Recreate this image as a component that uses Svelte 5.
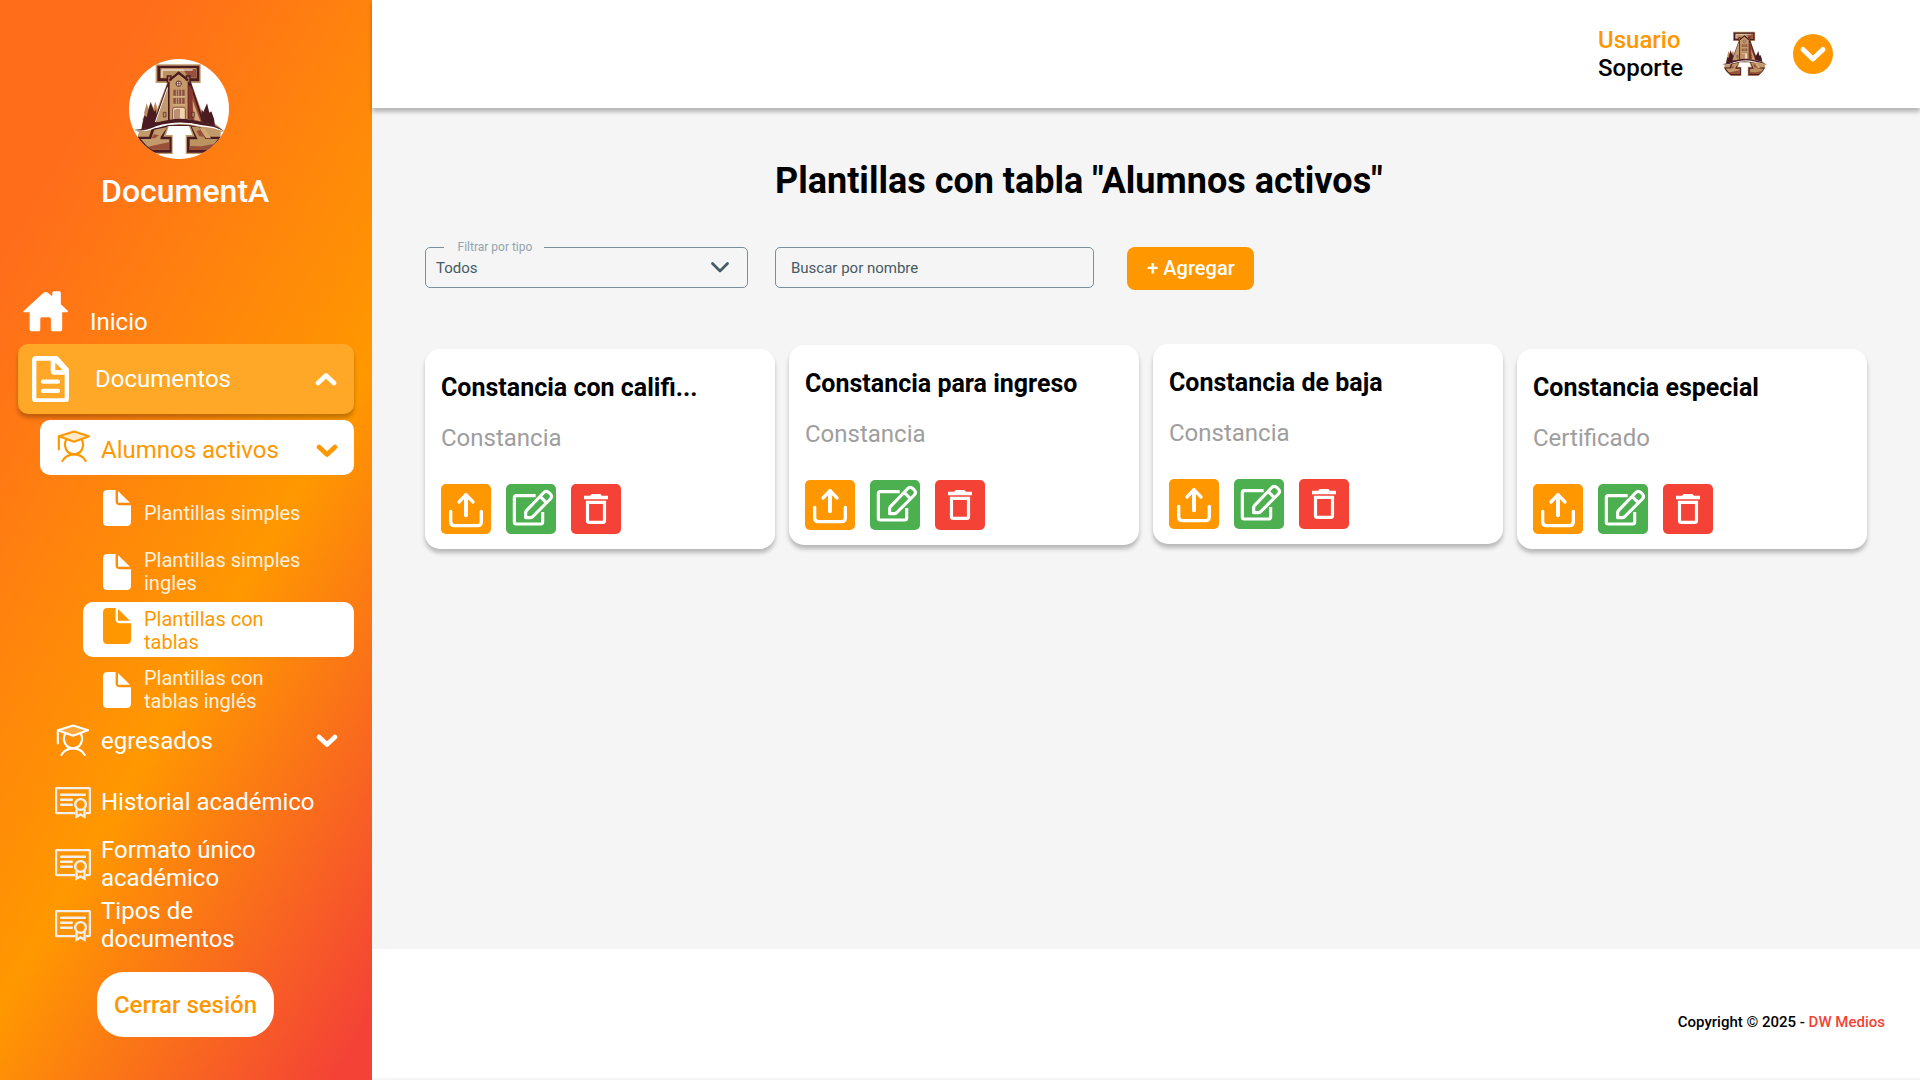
<script>
  const subItems = [
    { label: 'Plantillas simples', pos: 'single' },
    { label: 'Plantillas simples ingles', pos: 'low' },
    { label: 'Plantillas con tablas', pos: 'active' },
    { label: 'Plantillas con tablas inglés', pos: 'low' },
  ];
  const records = ['Historial académico', 'Formato único académico', 'Tipos de documentos'];
  const cards = [
    { title: 'Constancia con califi...', type: 'Constancia', lift: 5 },
    { title: 'Constancia para ingreso', type: 'Constancia', lift: 1 },
    { title: 'Constancia de baja', type: 'Constancia', lift: 0 },
    { title: 'Constancia especial', type: 'Certificado', lift: 5 },
  ];
</script>

{#snippet emblem()}
  <path d="M167 73H302V129H274L314 238Q345 246 372 274L362 277V291Q350 310 330 330L318 342H257V285H277L266 256H207L198 285H218V342H156Q125 322 112 291L117 277L103 270Q132 268 152 258L201 129H167Z" fill="#c39a6b" />
  <path d="M126 266L130 242L127 240L134 222L132 220L140 190L146 208L152 184L160 205L166 185L172 205L170 262Z" fill="#b98d60" />
  <path d="M124 268L128 246L134 226L140 232L147 202L152 188L158 203L163 215L167 208L171 235L160 264Z" fill="#4a1c22" />
  <path d="M346 264L342 236L334 214L328 218L321 190L315 204L310 216L305 208L303 238L318 258Z" fill="#4a1c22" />
  <path d="M172 77H298V124H272L313 247L157 255L205 124H172Z" fill="#4a1c22" />
  <path d="M181 84H290V115H262L237 96L211 115H181Z" fill="#bd9261" />
  <path d="M250 88L288 88V113H265Z" fill="#99503a" />
  <path d="M186 113V90H278" fill="none" stroke="#fff" stroke-width="3" />
  <path d="M204 142V243L167 247Z" fill="#c39a6b" />
  <path d="M203 142L166 246" stroke="#fff" stroke-width="3" />
  <path d="M270 134L306 247H278Z" fill="#9a4c38" />
  <path d="M272 165L301 244L284 241Z" fill="#d2a878" />
  <path d="M207 243V123L236 100L265 123V243Z" fill="#c59a68" stroke="#4a1c22" stroke-width="4" />
  <path d="M202 128V108H213V122M259 122V108H270V128" fill="#a7694c" stroke="#4a1c22" stroke-width="4" />
  <path d="M208 121L236 98L264 121" fill="none" stroke="#4a1c22" stroke-width="6" />
  <path d="M265 135V240L278 244V150Z" fill="#86382e" />
  <circle cx="236" cy="131" r="8" fill="#f5e6d0" stroke="#5b292a" stroke-width="3" />
  <path d="M236 123V139M228 131H244" stroke="#5b292a" stroke-width="2" />
  <path d="M220 149H254V167H220ZM220 174H254V191H220Z" fill="#8b5140" />
  <path d="M229 149V167M236 149V167M245 149V167M229 174V191M236 174V191M245 174V191M218 170H256M218 195H256" stroke="#e6c79e" stroke-width="2" />
  <path d="M218 240V208Q218 202 224 202H249Q256 202 256 208V240Z" fill="#f1d3ac" stroke="#5b292a" stroke-width="2" />
  <path d="M225 240V209M231 240V207M237 240V207" stroke="#8b4938" stroke-width="3" />
  <path d="M190 217H198V231H190ZM276 217H283V231H276Z" fill="#bd9261" stroke="#4a1c22" stroke-width="2" />
  <path d="M113 290H147L156 263L208 254H265L304 263L323 290H362L350 312L324 338H261V290H284L271 258H203L190 290H215V338H153L126 312Z" fill="#4a1c22" />
  <path d="M122 297H153L163 269L202 261L182 291L181 298H208V329H157L140 317Z" fill="#c39a6b" />
  <path d="M275 260L297 262L316 297H354L340 316L322 330H269V298H293Z" fill="#bd9261" />
  <path d="M145 320L184 311L207 307V329H157ZM322 330L345 311L305 319L269 318V330Z" fill="#99503a" />
  <path d="M289 273L309 268L316 291L298 289ZM162 283L177 286L165 295H154Z" fill="#99503a" />
  <path d="M298 263L316 267L333 295H318Z" fill="#d2a878" />
  <path d="M103 270Q132 272 168 253Q236 224 309 248Q343 251 372 275Q345 263 309 260Q236 240 168 263Q132 279 103 270Z" fill="#fff" />
  <path d="M102 269Q133 271 168 250Q236 224 309 247Q347 253 372 274Q344 258 307 256Q236 238 168 259Q132 277 102 269Z" fill="#4a1c22" />
  <path d="M168 263Q236 240 307 259" fill="none" stroke="#fff" stroke-width="3" />
{/snippet}

{#snippet student()}
  <svg class="student" viewBox="171 481 99 96">
    <path d="M179 500L222 485L267 500L222 517Z" fill="currentColor" fill-opacity=".22" />
    <g fill="none" stroke="currentColor" stroke-width="6.500" stroke-linecap="round" stroke-linejoin="round">
      <path d="M177 500L222 485.500L267 500L222 516Z" />
      <path d="M176.500 501V539M198 511Q194 520 195 529Q199 553 222 554Q245 553 249 529Q250 520 246 511M187 574Q197 555 222 554Q248 555 257 574" />
    </g>
  </svg>
{/snippet}

{#snippet chevron()}
  <svg class="chevron" viewBox="0 0 22 14"><path d="M3 3L11 10.500L19 3" /></svg>
{/snippet}

<div class="app">
  <aside>
    <div class="brand">
      <svg class="logo" viewBox="87 57 300 300">
        <defs><clipPath id="disc"><circle cx="237" cy="207" r="150" /></clipPath></defs>
        <circle cx="237" cy="207" r="150" fill="#fff" />
        <g clip-path="url(#disc)">{@render emblem()}</g>
      </svg>
      <h2>DocumentA</h2>
    </div>

    <nav>
      <div class="home">
        <svg class="house" viewBox="68 62 137 122">
          <path d="M70 122L129 68Q136 62 143 67L156 78V68Q156 63 161 63H177Q182 63 182 68V102L202 121Q205 125 200 126H186V179Q186 183 182 183H156Q152 183 152 179V146Q152 141 147 141H125Q120 141 120 146V179Q120 183 116 183H92Q88 183 88 179V126H71Q67 126 70 122Z" fill="#fff" />
        </svg>
        <span>Inicio</span>
      </div>
      <div class="docs">
        <svg class="page" viewBox="96 258 111 140">
          <path fill-rule="evenodd" d="M108 258H168Q172 258 175 261L204 293Q207 296 207 300V386Q207 398 195 398H108Q96 398 96 386V270Q96 258 108 258ZM109 272V385H194V314H164Q152 314 152 302V272ZM166 278V300H188Z" fill="#fff" />
          <path d="M129 335H174M129 363H174" stroke="#fff" stroke-width="13" stroke-linecap="round" />
        </svg>
        <span>Documentos</span>
        <div class="up">{@render chevron()}</div>
      </div>
      <div class="group on">{@render student()}<span>Alumnos activos</span>{@render chevron()}</div>
      <div class="subs">
        {#each subItems as item}
          <div class="sub {item.pos}">
            <svg class="file" viewBox="0 0 28 36">
              <path d="M4.500 0H12.600V11Q12.600 15.300 17 15.300H28V31.500Q28 36 23.500 36H4.500Q0 36 0 31.500V4.500Q0 0 4.500 0ZM15 1L27 12.800H15Z" fill="currentColor" />
            </svg>
            <span>{item.label}</span>
          </div>
        {/each}
      </div>
      <div class="group grads">{@render student()}<span>egresados</span>{@render chevron()}</div>
      {#each records as r}
        <div class="record" class:one={r === records[0]}>
          <svg class="cert" viewBox="46 264 107 94" fill="none" stroke="#f2efec" stroke-width="7">
            <path d="M106 342H53Q49 342 49 338V271Q49 267 53 267H145Q150 267 150 271V338Q150 342 145 342H138" />
            <path d="M64 287H135M64 302H96M64 317H96" stroke-linecap="round" />
            <circle cx="122" cy="316" r="16" />
            <path d="M110 329V353L122 346L134 353V329" />
          </svg>
          <span>{r}</span>
        </div>
      {/each}
    </nav>
    <button class="logout">Cerrar sesión</button>
  </aside>

  <div class="content">
    <header>
      <div class="user"><span>Usuario</span><b>Soporte</b></div>
      <svg class="avatar" viewBox="100 70 274 276">{@render emblem()}</svg>
      <div class="more"><svg viewBox="0 0 40 40"><path d="M10 15.500L19.900 25L30 15.500" /></svg></div>
    </header>

    <main>
      <h1>Plantillas con tabla "Alumnos activos"</h1>
      <div class="tools">
        <div class="field select">
          <span class="legend">Filtrar por tipo</span>
          <span>Todos</span>
          <svg viewBox="0 0 18 11"><path d="M1.500 1.500L9 9L16.500 1.500" /></svg>
        </div>
        <div class="field search"><span>Buscar por nombre</span></div>
        <button class="add">+ Agregar</button>
      </div>

      <div class="cards">
        {#each cards as c}
          <article style:margin-top="{c.lift}px">
            <h3>{c.title}</h3>
            <p>{c.type}</p>
            <div class="actions">
              <button class="share">
                <svg viewBox="0 0 150 150" fill="none" stroke="#fff" stroke-width="10" stroke-linecap="round">
                  <path d="M75 94V34" stroke-width="12" />
                  <path d="M54 54L75 32L96 54" stroke-linejoin="round" />
                  <path d="M29 82V113Q29 125 41 125H109Q121 125 121 113V82" />
                </svg>
              </button>
              <button class="edit">
                <svg viewBox="0 0 150 150" fill="none" stroke="#fff" stroke-width="9.500" stroke-linejoin="round">
                  <path d="M89 35H31Q25 35 25 41V114Q25 120 31 120H104Q110 120 110 114V84" />
                  <path d="M59 101V85Q59 82 62 79L112 27Q120 18 129 26L133 30Q140 37 133 45L82 96Q78 101 73 101ZM103 38L121 56" />
                </svg>
              </button>
              <button class="remove">
                <svg viewBox="0 0 150 150">
                  <path d="M39 35H57L62 30H88L93 35H111V46H39Z" fill="#fff" />
                  <path d="M49.500 55H100.500V110Q100.500 115 95 115H55Q49.500 115 49.500 110Z" fill="none" stroke="#fff" stroke-width="9.500" />
                </svg>
              </button>
            </div>
          </article>
        {/each}
      </div>
    </main>

    <footer><span>Copyright © 2025 - <em>DW Medios</em></span></footer>
  </div>
</div>

<style>
  :global(body) { margin: 0; background: #f5f5f5; }
  * { box-sizing: border-box; }
  svg { display: block; flex: none; }
  button { border: 0; font: inherit; padding: 0; }
  .app { display: flex; width: 1920px; height: 1080px; overflow: hidden; background: #f5f5f5; font: 400 24px/28px Roboto, sans-serif; color: #000; }

  aside { width: 372px; height: 1080px; flex: none; color: #fff; background: linear-gradient(120deg, #ff6d1b 15%, #ff9800 58.5%, #f44336 96%); }
  .brand { height: 285px; padding-top: 59px; }
  .logo { width: 100px; height: 100px; margin-left: 129px; }
  h2 { margin: 13px 0 0 101px; font: 500 32px/38px Roboto, sans-serif; white-space: nowrap; }

  .home { display: flex; align-items: flex-start; height: 59px; padding: 6px 0 0 23px; }
  .house { width: 45.500px; height: 40.500px; }
  .home span { margin: 17px 0 0 21.500px; }
  .docs { display: flex; align-items: center; width: 336px; height: 70px; margin-left: 18px; padding: 0 17px 0 14px; border-radius: 10px; background: #ffa726; box-shadow: 0 4px 4px rgba(0, 0, 0, .25); }
  .page { width: 37px; height: 46.600px; }
  .docs span { margin-left: 26px; }
  .chevron { width: 22px; height: 14px; fill: none; stroke: currentColor; stroke-width: 4.600; stroke-linecap: round; stroke-linejoin: round; }
  .up { margin-left: auto; transform: rotate(180deg); }
  .group { display: flex; align-items: center; width: 314px; height: 55px; margin-left: 40px; padding: 0 16px 0 17px; border-radius: 10px; }
  .group.on { margin-top: 6px; color: #ff9800; background: #fff; }
  .student { width: 33px; height: 32px; margin-bottom: 3px; }
  .group span { margin: 5px 0 0 11px; }
  .group .chevron { margin: 6px 0 0 auto; }
  .group.grads { padding-left: 16px; }
  .group.grads span { margin: -2px 0 0 12px; }
  .group.grads .chevron { margin-top: -2px; }

  .subs { display: flex; flex-direction: column; gap: 4px; margin: 9px 0 -2px 83px; }
  .sub { display: flex; width: 271px; height: 55px; padding: 6px 20px; border-radius: 10px; font-size: 20px; line-height: 23px; }
  .file { width: 28px; height: 36px; }
  .sub span { width: 162px; margin-left: 13px; opacity: .87; }
  .single span { padding-top: 12px; }
  .low .file { margin-top: 5px; }
  .active { color: #ff9800; background: #fff; }
  .sub.active span { opacity: 1; }

  .record { display: flex; height: 61px; padding-left: 55px; align-items: center; }
  .record.one { height: 62px; margin-top: 3px; }
  .cert { width: 36px; height: 31.500px; margin-top: 1px; }
  .record.one .cert { margin-top: 0; }
  .record span { width: 170px; margin: -2px 0 0 10px; }
  .record.one span { width: 225px; margin-top: -3px; }
  .logout { display: block; width: 177px; height: 65px; margin: 16px 0 0 97px; border-radius: 27px; background: #fff; color: #ff9800; font-weight: 500; }

  .content { display: flex; flex-direction: column; flex: 1; }
  header { display: flex; align-items: center; justify-content: flex-end; height: 108px; padding-right: 87px; background: #fff; box-shadow: 0 4px 4px rgba(0, 0, 0, .25); }
  .user { display: flex; flex-direction: column; width: 124px; font-weight: 500; }
  .user span { color: #ff9800; }
  .user b { font-weight: 500; }
  .avatar { width: 45px; height: 46px; }
  .more { width: 40px; height: 40px; margin-left: 26px; border-radius: 50%; background: #ff9800; }
  .more path { fill: none; stroke: #fff; stroke-width: 5; stroke-linecap: round; stroke-linejoin: round; }

  main { height: 841px; padding: 52px 53px 0; }
  h1 { margin: 0 0 0 350px; font: 700 36px/42px Roboto, sans-serif; white-space: nowrap; }
  .tools { display: flex; margin-top: 45px; height: 43px; }
  .field { position: relative; display: flex; align-items: center; height: 41px; border: 1px solid #78909c; border-radius: 5px; font-size: 15px; line-height: 18px; color: #455a64; }
  .select { width: 323px; justify-content: space-between; padding: 0 18px 0 10px; }
  .legend { position: absolute; left: 18px; top: -9px; width: 100px; padding-left: 13.500px; background: #f5f5f5; font-size: 12px; line-height: 16px; color: #90a4ae; white-space: nowrap; }
  .select svg { width: 18px; height: 11px; fill: none; stroke: #455a64; stroke-width: 2.700; stroke-linecap: round; stroke-linejoin: round; }
  .search { width: 319px; margin-left: 27px; padding-left: 15px; }
  .add { width: 127px; height: 43px; margin-left: 33px; border-radius: 8px; background: #ff9800; color: #fff; font-size: 20px; font-weight: 500; line-height: 42px; padding: 0 0 1px 1px; }

  .cards { display: flex; align-items: flex-start; gap: 14px; margin-top: 54px; }
  article { width: 350px; height: 200px; padding: 25px 16px 15px; border-radius: 15px; background: #fff; box-shadow: 0 4px 4px rgba(0, 0, 0, .25); flex: none; }
  h3 { margin: 0; font: 700 25px/28px Roboto, sans-serif; white-space: nowrap; }
  p { margin: 22px 0 0; color: #9e9e9e; }
  .actions { display: flex; gap: 15px; margin-top: 32px; }
  .actions button { width: 50px; height: 50px; border-radius: 5px; }
  .share { background: #ff9800; }
  .edit { background: #4caf50; }
  .remove { background: #f44336; }

  footer { display: flex; align-items: center; justify-content: flex-end; height: 129px; padding: 16px 35px 0 0; background: #fff; font-size: 15px; font-weight: 500; }
  em { font-style: normal; color: #f44336; }
</style>
